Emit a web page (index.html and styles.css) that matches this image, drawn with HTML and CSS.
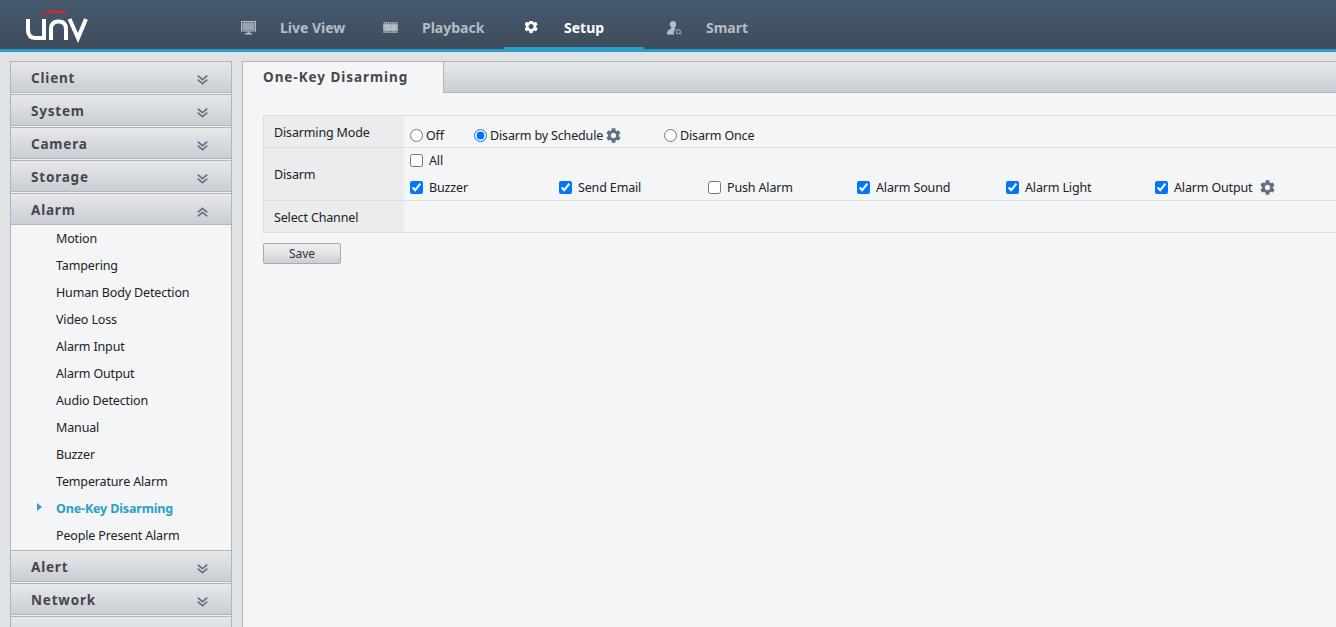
FILE: index.html
```html
<!DOCTYPE html>
<html lang="en">
<head>
    <meta charset="UTF-8">
    <meta name="viewport" content="width=device-width, initial-scale=1.0">
    <title>One-Key Disarming</title>
    <link rel="stylesheet" href="styles.css">
</head>
<body>
    <svg class="defs" width="0" height="0">
        <symbol id="gear" viewBox="2 2 20 20">
            <path fill-rule="evenodd" d="M19.14 12.94c.04-.3.06-.61.06-.94 0-.32-.02-.64-.07-.94l2.03-1.58c.18-.14.23-.41.12-.61l-1.92-3.32c-.12-.22-.37-.29-.59-.22l-2.39.96c-.5-.38-1.03-.7-1.62-.94l-.36-2.54c-.04-.24-.24-.41-.48-.41h-3.84c-.24 0-.43.17-.47.41l-.36 2.54c-.59.24-1.13.57-1.62.94l-2.39-.96c-.22-.08-.47 0-.59.22L2.74 8.87c-.12.21-.08.47.12.61l2.03 1.58c-.05.3-.09.63-.09.94s.02.64.07.94l-2.03 1.58c-.18.14-.23.41-.12.61l1.92 3.32c.12.22.37.29.59.22l2.39-.96c.5.38 1.03.7 1.62.94l.36 2.54c.05.24.24.41.48.41h3.84c.24 0 .44-.17.47-.41l.36-2.54c.59-.24 1.13-.56 1.62-.94l2.39.96c.22.08.47 0 .59-.22l1.92-3.32c.12-.22.07-.47-.12-.61l-2.01-1.58zM12 15.6c-1.98 0-3.6-1.62-3.6-3.6s1.62-3.6 3.6-3.6 3.6 1.62 3.6 3.6-1.62 3.6-3.6 3.6z"/>
        </symbol>
        <symbol id="chev-down" viewBox="0 0 11 10">
            <path d="M.7.7l4.8 4 4.8-4M.7 4.7l4.8 4 4.8-4" fill="none" stroke="currentColor" stroke-width="1.6"/>
        </symbol>
        <symbol id="chev-up" viewBox="0 0 11 10">
            <path d="M.7 5.3l4.8-4 4.8 4M.7 9.3l4.8-4 4.8 4" fill="none" stroke="currentColor" stroke-width="1.6"/>
        </symbol>
    </svg>

    <header class="topbar">
        <svg class="logo" width="110" height="49" viewBox="0 0 110 49">
            <path d="M42 14.500Q55 6.500 68 14.500Q55 9.500 42 14.500z" fill="#e5252a" stroke="#e5252a" stroke-width=".8"/>
            <path d="M28 19V30Q28 38 36 38H44V19M51 40V29Q51 21.500 58.500 21.500Q66 21.500 66 29V40M69.500 19L78 38L86 19" fill="none" stroke="#fff" stroke-width="4"/>
        </svg>
        <nav class="nav">
            <a class="nav-tab">
                <svg class="nav-icon" viewBox="0 0 15 14"><path fill-rule="evenodd" d="M0 0h15v10.500H0zM1 1v8.500h13V1zM6.500 10.500h2V12h2.500v1.500H4V12h2.500z"/><path class="pane" d="M1.500 1.500h12V9h-12z"/></svg>
                <span>Live View</span>
            </a>
            <a class="nav-tab">
                <svg class="nav-icon" viewBox="0 0 15 14"><path class="pane" d="M0 1h15v11H0z"/><path d="M1.500 3.500h5.700v6h-5.700zM7.900 3.500h5.600v6H7.900z"/><path class="holes" d="M0 2.200h15M0 10.800h15"/></svg>
                <span>Playback</span>
            </a>
            <a class="nav-tab active">
                <svg class="nav-icon" viewBox="2 2 20 20"><use href="#gear"/></svg>
                <span>Setup</span>
            </a>
            <a class="nav-tab">
                <svg class="nav-icon" viewBox="0 0 15 14"><path d="M6 0c2 0 3.200 1.500 3.200 3.300 0 1.300-.6 2.400-1.400 3v1.200c.5.200 1 .4 1.400.7a3.300 3.300 0 0 0-1.700 5.300H0v-1.700c0-1.900 2.200-3.400 4.200-4.300V6.300C3.400 5.700 2.800 4.600 2.800 3.300 2.800 1.500 4 0 6 0z"/><circle cx="11.300" cy="10.800" r="2.100" fill="none" stroke="currentColor"/><path d="M12.800 12.300l1.400 1.400" stroke="currentColor"/></svg>
                <span>Smart</span>
            </a>
        </nav>
    </header>

    <div class="page">
        <aside class="sidebar">
            <div class="side-head"><span>Client</span><svg class="chev"><use href="#chev-down"/></svg></div>
            <div class="side-head"><span>System</span><svg class="chev"><use href="#chev-down"/></svg></div>
            <div class="side-head"><span>Camera</span><svg class="chev"><use href="#chev-down"/></svg></div>
            <div class="side-head"><span>Storage</span><svg class="chev"><use href="#chev-down"/></svg></div>
            <div class="side-head"><span>Alarm</span><svg class="chev"><use href="#chev-up"/></svg></div>
            <ul class="side-list">
                <li>Motion</li>
                <li>Tampering</li>
                <li>Human Body Detection</li>
                <li>Video Loss</li>
                <li>Alarm Input</li>
                <li>Alarm Output</li>
                <li>Audio Detection</li>
                <li>Manual</li>
                <li>Buzzer</li>
                <li>Temperature Alarm</li>
                <li class="current">One-Key Disarming</li>
                <li>People Present Alarm</li>
            </ul>
            <div class="side-head"><span>Alert</span><svg class="chev"><use href="#chev-down"/></svg></div>
            <div class="side-head"><span>Network</span><svg class="chev"><use href="#chev-down"/></svg></div>
            <div class="side-head"></div>
        </aside>

        <main class="content">
            <div class="tabs">
                <div class="tab">One-Key Disarming</div>
                <div class="tab-rest"></div>
            </div>
            <div class="form-wrap">
                <div class="form-table">
                    <div class="row row-mode">
                        <div class="row-label">Disarming Mode</div>
                        <div class="row-body mode-options">
                            <label class="radio radio-off"><input type="radio" name="mode">Off</label>
                            <label class="radio radio-schedule"><input type="radio" name="mode" checked>Disarm by Schedule<svg class="gear"><use href="#gear"/></svg></label>
                            <label class="radio"><input type="radio" name="mode">Disarm Once</label>
                        </div>
                    </div>
                    <div class="row row-disarm">
                        <div class="row-label">Disarm</div>
                        <div class="row-body disarm-options">
                            <label class="check"><input type="checkbox">All</label>
                            <div class="check-line">
                                <label class="check"><input type="checkbox" checked>Buzzer</label>
                                <label class="check"><input type="checkbox" checked>Send Email</label>
                                <label class="check"><input type="checkbox">Push Alarm</label>
                                <label class="check"><input type="checkbox" checked>Alarm Sound</label>
                                <label class="check"><input type="checkbox" checked>Alarm Light</label>
                                <label class="check"><input type="checkbox" checked>Alarm Output<svg class="gear gear-output"><use href="#gear"/></svg></label>
                            </div>
                        </div>
                    </div>
                    <div class="row row-channel">
                        <div class="row-label">Select Channel</div>
                        <div class="row-body"></div>
                    </div>
                </div>
                <button class="save-btn">Save</button>
            </div>
        </main>
    </div>
</body>
</html>
```

FILE: styles.css
```css
* {
    box-sizing: border-box;
}

html, body {
    height: 627px;
    margin: 0;
    overflow: hidden;
}

body {
    background-color: #e0e3e6;
    color: #222;
    font-family: "Noto Sans", "Open Sans", sans-serif;
    font-size: 12.5px;
    letter-spacing: -0.15px;
}

.defs {
    display: block;
    height: 0;
}

/* top bar */
.topbar {
    display: flex;
    height: 52px;
    background: linear-gradient(#46596f, #3f4c5c 49px);
    border-bottom: 3px solid #2aa0c8;
}

.logo {
    flex: none;
}

.nav {
    display: flex;
    gap: 2px;
    margin-left: 110px;
}

.nav-tab {
    display: flex;
    align-items: center;
    width: 140px;
    height: 52px;
    padding: 2px 0 0 21px;
    color: #b4bdc8;
    font-size: 14px;
    font-weight: 700;
    letter-spacing: 0;
}

.nav-tab.active {
    padding-top: 7px;
    color: #fff;
    border-bottom: 5px solid #2aa0c8;
}

.nav-icon {
    width: 15px;
    height: 14px;
    margin: 2px 24px 0 0;
    fill: currentColor;
}

.nav-icon .pane {
    fill: #9aa5b1;
}

.nav-icon .holes {
    fill: none;
    stroke: #42515f;
    stroke-width: 1;
    stroke-dasharray: 1 1;
}

/* page */
.page {
    display: flex;
    align-items: flex-start;
    padding: 9px 0 0 10px;
}

.sidebar {
    flex: none;
    width: 222px;
    background-color: #f4f5f7;
    border: 1px solid #b3b6b9;
    border-bottom: 0;
}

.side-head {
    display: flex;
    align-items: center;
    justify-content: space-between;
    height: 31px;
    margin-bottom: 2px;
    padding: 2px 23px 0 20px;
    background: linear-gradient(#e6e8ea, #c9ced5);
    border-bottom: 1px solid #b3b6b9;
    box-shadow: 0 1px 0 #eef0f2, 0 2px 0 #b3b6b9;
    color: #47474a;
    font-size: 13.5px;
    font-weight: 700;
    letter-spacing: 0.8px;
}

.chev {
    width: 11px;
    height: 10px;
    margin-top: 3px;
    color: #66717f;
}

.side-list {
    margin: -2px 0 0;
    padding: 0 0 1px;
    list-style: none;
    background-color: #f4f5f7;
    border-bottom: 1px solid #b3b6b9;
}

.side-list li {
    height: 27px;
    padding-left: 45px;
    line-height: 27px;
    white-space: nowrap;
}

.side-list .current {
    position: relative;
    color: #2aa0c8;
    font-weight: 700;
}

.side-list .current::before {
    content: "";
    position: absolute;
    left: 26px;
    top: 8px;
    border-left: 5px solid #2aa0c8;
    border-top: 4px solid transparent;
    border-bottom: 4px solid transparent;
}

/* content */
.content {
    flex: 1;
    height: 566px;
    margin-left: 10px;
    background-color: #f4f5f7;
    border-top: 1px solid #b3b6b9;
    border-left: 1px solid #b3b6b9;
}

.tabs {
    display: flex;
    height: 31px;
}

.tab {
    width: 200px;
    padding-left: 20px;
    color: #47474a;
    font-size: 13.5px;
    font-weight: 700;
    letter-spacing: 0.95px;
    line-height: 30px;
}

.tab-rest {
    flex: 1;
    background: linear-gradient(#e6e8ea, #c9ced5);
    border-left: 1px solid #b3b6b9;
    border-bottom: 1px solid #b3b6b9;
}

.form-wrap {
    padding: 22px 0 0 20px;
}

.form-table {
    border: 1px solid #dcdee0;
    border-right: 0;
    border-bottom: 0;
}

.row {
    display: flex;
    border-bottom: 1px solid #dcdee0;
}

.row-mode {
    height: 32px;
}

.row-disarm {
    height: 53px;
}

.row-channel {
    height: 32px;
}

.row-label {
    display: flex;
    align-items: center;
    flex: none;
    width: 140px;
    padding-left: 10px;
    background-color: #ebecee;
}

.row-mode .row-label,
.row-channel .row-label {
    padding-top: 2px;
}

.row-body {
    flex: 1;
    padding-left: 6px;
}

label {
    display: inline-flex;
    align-items: center;
    white-space: nowrap;
}

input {
    flex: none;
    width: 13px;
    height: 13px;
    margin: 0;
}

.mode-options {
    display: flex;
    align-items: center;
    padding-top: 8px;
}

.radio input {
    margin-right: 3px;
}

.radio-off {
    width: 64px;
}

.radio-schedule {
    width: 190px;
}

.gear {
    width: 15px;
    height: 15px;
    margin-left: 3px;
    fill: #5f6f80;
}

.gear-output {
    margin-left: 8px;
}

.disarm-options {
    padding-top: 3px;
}

.check {
    height: 18px;
}

.check input {
    margin-right: 6px;
}

.check-line {
    display: flex;
    margin-top: 8px;
}

.check-line .check {
    width: 149px;
}

.save-btn {
    display: block;
    width: 78px;
    height: 21px;
    margin-top: 10px;
    padding: 0;
    background: linear-gradient(#eceeef 0%, #e2e4e6 50%, #c9ced5 100%);
    border: 1px solid #a9acaf;
    border-radius: 2px;
    color: #333;
    font-family: inherit;
    font-size: 12px;
}
```
